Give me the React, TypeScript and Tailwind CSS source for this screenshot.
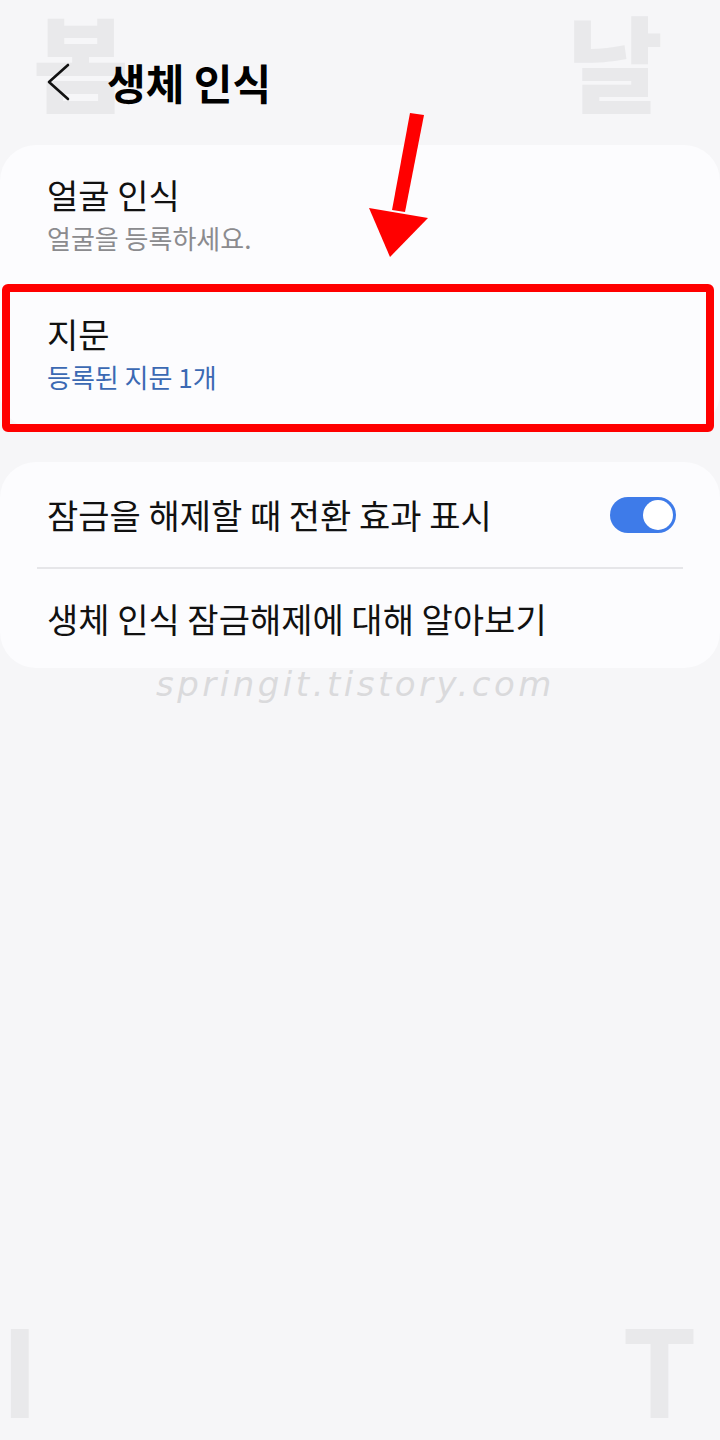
import React, { useState } from "react";

const font = { fontFamily: '"Noto Sans CJK KR", "Noto Sans", sans-serif' };

function Toggle({ on, onChange }: { on: boolean; onChange: (v: boolean) => void }) {
  return (
    <button
      onClick={() => onChange(!on)}
      className={`flex h-[36px] w-[66px] items-center rounded-full p-[3px] ${
        on ? "justify-end bg-[#3e7be9]" : "justify-start bg-[#c9c9cc]"
      }`}
    >
      <span className="block h-[30px] w-[30px] rounded-full bg-white" />
    </button>
  );
}

function Watermarks() {
  return (
    <>
      <span className="pointer-events-none absolute left-[33px] top-[8px] text-[104px] font-black leading-none text-[#e9e9eb]">
        봄
      </span>
      <span className="pointer-events-none absolute left-[567px] top-[8px] text-[104px] font-black leading-none text-[#e9e9eb]">
        날
      </span>
      <span className="pointer-events-none absolute left-[0px] top-[1306px] text-[120px] font-bold leading-none text-[#e9e9eb]">
        I
      </span>
      <span className="pointer-events-none absolute left-[622px] top-[1306px] text-[120px] font-bold leading-none text-[#e9e9eb]">
        T
      </span>
    </>
  );
}

function Arrow() {
  return (
    <svg className="pointer-events-none absolute left-0 top-0" width="720" height="300" viewBox="0 0 720 300">
      <polygon points="410,113 424,115 405,212 392,210" fill="#ff0000" />
      <polygon points="369,208 428,218 390,257" fill="#ff0000" />
    </svg>
  );
}

export default function App() {
  const [effect, setEffect] = useState(true);

  return (
    <div className="relative min-h-[1440px] w-[720px] overflow-hidden bg-[#f6f6f8]" style={font}>
      <Watermarks />

      <div className="relative mt-[32px] flex h-[100px] items-center pl-[45px]">
        <svg width="26" height="40" viewBox="0 0 26 40" className="mr-[36px]">
          <polyline points="23,3 4,20 23,37" fill="none" stroke="#111" strokeWidth="2.6" strokeLinecap="round" strokeLinejoin="round" />
        </svg>
        <h1 className="text-[42px] font-bold leading-none text-black">생체 인식</h1>
      </div>

      <div className="relative mt-[13px] rounded-[36px] bg-[#fcfcfe]">
        <div className="px-[47px] pb-[30px] pt-[29px]">
          <p className="text-[34px] leading-[42px] text-[#111]">얼굴 인식</p>
          <p className="mt-[6px] text-[26px] leading-[32px] text-[#8b8b8e]">얼굴을 등록하세요.</p>
        </div>
        <div className="px-[47px] pb-[36px] pt-[29px]">
          <p className="text-[34px] leading-[42px] text-[#111]">지문</p>
          <p className="mt-[6px] text-[26px] leading-[32px] text-[#3b69b3]">등록된 지문 1개</p>
        </div>
      </div>

      <div className="relative mt-[33px] rounded-[36px] bg-[#fcfcfe]">
        <div className="flex h-[105px] items-center justify-between pl-[47px] pr-[44px]">
          <p className="text-[34px] leading-[42px] text-[#111]">잠금을 해제할 때 전환 효과 표시</p>
          <Toggle on={effect} onChange={setEffect} />
        </div>
        <div className="mx-[37px] h-[2px] bg-[#e6e6e9]" />
        <div className="flex h-[99px] items-center px-[47px]">
          <p className="text-[34px] leading-[42px] text-[#111]">생체 인식 잠금해제에 대해 알아보기</p>
        </div>
      </div>

      <p
        className="pointer-events-none relative ml-[156px] mt-[-6px] text-[34px] italic leading-[44px] tracking-[3.5px] text-[#dadadc]"
        style={{ fontFamily: '"DejaVu Sans", sans-serif', fontWeight: 300 }}
      >
        springit.tistory.com
      </p>

      <div className="pointer-events-none absolute left-[2px] top-[284px] h-[148px] w-[712px] rounded-[6px] border-[8px] border-[#ff0000]" />
      <Arrow />
    </div>
  );
}
